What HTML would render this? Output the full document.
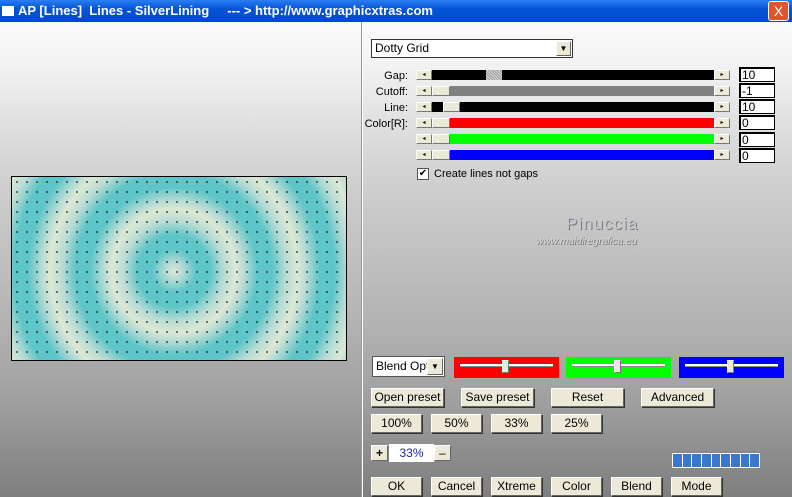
<!DOCTYPE html>
<html><head><style>
*{margin:0;padding:0;box-sizing:border-box}
html,body{width:792px;height:497px;overflow:hidden}
body{font-family:"Liberation Sans",sans-serif;font-size:11px;position:relative;background:linear-gradient(to bottom,#ffffff 0px,#f4f4f4 60px,#dedede 130px,#cbcbcb 200px,#b8b8b8 300px,#a0a0a0 400px,#7e7e7e 497px)}
.abs{position:absolute}
#title{left:0;top:0;width:792px;height:22px;background:linear-gradient(#2a7ef0,#0554d8 40%,#0449c8);color:#fff;font-weight:bold;font-size:13px;line-height:22px}
#close{left:768px;top:1px;width:21px;height:20px;background:#e0532c;border:1px solid #fff;border-radius:3px;color:#fff;font-size:14px;text-align:center;line-height:18px}
#img{left:11px;top:176px;width:336px;height:185px;border:1px solid #000;
background:radial-gradient(circle at 50% 50%, #000 0.6px, transparent 1px) 0 0/10px 10px,
repeating-radial-gradient(circle at 162px 94px,#dbe8d4 0px,#b8dcd4 8px,#5ec5c8 22px,#5ec5c8 36px,#b8dcd4 50px,#dbe8d4 62px);}
.lbl{text-align:right;width:50px;left:358px;font-size:11px}
.btn{background:#ece9d8;border:1px solid;border-color:#fff #666 #666 #fff;box-shadow:1px 1px 0 #333;height:19px;text-align:center;line-height:17px;font-size:12px}
.arr{width:16px;height:10px;background:#ece9d8;border:1px solid;border-color:#fff #777 #777 #fff;font-size:6px;line-height:8px;text-align:center}
.thumb{width:18px;height:10px;background:#ece9d8;border:1px solid;border-color:#fff #777 #777 #fff}
.val{left:739px;width:36px;height:15px;background:#fff;border:1px solid #000;border-top-width:2px;border-left-width:2px;font-size:12px;line-height:12px;padding-left:1px}
</style></head><body>
<div class="abs" id="title"><span style="display:inline-block;width:12px;height:10px;background:#fff;margin:0 4px 0 2px;vertical-align:-1px"></span>AP [Lines]&nbsp; Lines - SilverLining &nbsp;&nbsp;&nbsp; --- &gt; http://www.graphicxtras.com</div>
<div class="abs" id="close">X</div>
<div class="abs" style="left:361px;top:22px;width:1px;height:475px;background:#999"></div>
<div class="abs" style="left:362px;top:22px;width:1px;height:475px;background:#fff"></div>
<div class="abs" id="img"></div>

<div class="abs" style="left:371px;top:39px;width:202px;height:19px;background:#fff;border:1px solid #333;font-size:12px;line-height:17px;padding-left:3px">Dotty Grid</div>
<div class="abs btn" style="left:556px;top:41px;width:15px;height:15px;font-size:8px;line-height:13px;box-shadow:none">▼</div>

<div class="abs lbl" style="top:70px">Gap:</div>
<div class="abs lbl" style="top:86px">Cutoff:</div>
<div class="abs lbl" style="top:102px">Line:</div>
<div class="abs lbl" style="top:118px">Color[R]:</div>

<div class="abs arr" style="left:416px;top:70px">◂</div><div class="abs" style="left:432px;top:70px;width:282px;height:10px;background:#000"></div><div class="abs" style="left:486px;top:70px;width:16px;height:10px;background:repeating-linear-gradient(45deg,#999 0 1px,#ddd 1px 2px)"></div><div class="abs arr" style="left:714px;top:70px">▸</div>
<div class="abs arr" style="left:416px;top:86px">◂</div><div class="abs" style="left:432px;top:86px;width:282px;height:10px;background:#808080"></div><div class="abs thumb" style="left:432px;top:86px"></div><div class="abs arr" style="left:714px;top:86px">▸</div>
<div class="abs arr" style="left:416px;top:102px">◂</div><div class="abs" style="left:432px;top:102px;width:282px;height:10px;background:#000"></div><div class="abs thumb" style="left:443px;top:102px;width:17px"></div><div class="abs arr" style="left:714px;top:102px">▸</div>
<div class="abs arr" style="left:416px;top:118px">◂</div><div class="abs" style="left:432px;top:118px;width:282px;height:10px;background:#f00"></div><div class="abs thumb" style="left:432px;top:118px"></div><div class="abs arr" style="left:714px;top:118px">▸</div>
<div class="abs arr" style="left:416px;top:134px">◂</div><div class="abs" style="left:432px;top:134px;width:282px;height:10px;background:#0f0"></div><div class="abs thumb" style="left:432px;top:134px"></div><div class="abs arr" style="left:714px;top:134px">▸</div>
<div class="abs arr" style="left:416px;top:150px">◂</div><div class="abs" style="left:432px;top:150px;width:282px;height:10px;background:#00f"></div><div class="abs thumb" style="left:432px;top:150px"></div><div class="abs arr" style="left:714px;top:150px">▸</div>

<div class="abs val" style="top:67px">10</div>
<div class="abs val" style="top:83px">-1</div>
<div class="abs val" style="top:99px">10</div>
<div class="abs val" style="top:115px">0</div>
<div class="abs val" style="top:132px">0</div>
<div class="abs val" style="top:148px">0</div>

<div class="abs" style="left:417px;top:168px;width:12px;height:12px;background:#fff;border:1px solid #555;font-size:10px;line-height:10px;text-align:center">✔</div>
<div class="abs" style="left:434px;top:168px;font-size:11px">Create lines not gaps</div>

<div class="abs" style="left:566px;top:214px;font-size:17px;color:#c8c8d4;text-shadow:1px 1px 0 #777;letter-spacing:1px">Pinuccia</div>
<div class="abs" style="left:536px;top:236px;font-size:10px;color:#d8d8e0;text-shadow:1px 1px 0 #777;font-style:italic">www.maidiregrafica.eu</div>

<div class="abs" style="left:372px;top:356px;width:73px;height:21px;background:#fff;border:1px solid #555;font-size:12px;line-height:19px;padding-left:3px;overflow:hidden;white-space:nowrap">Blend Optio</div>
<div class="abs btn" style="left:427px;top:358px;width:16px;height:17px;font-size:8px;line-height:15px;box-shadow:none">▼</div>
<div class="abs" style="left:454px;top:357px;width:105px;height:21px;background:#f00"></div>
<div class="abs" style="left:566px;top:357px;width:105px;height:21px;background:#0f0"></div>
<div class="abs" style="left:679px;top:357px;width:105px;height:21px;background:#00f"></div>
<div class="abs" style="left:460px;top:364px;width:93px;height:3px;background:#fff;border-bottom:1px solid #888"></div>
<div class="abs" style="left:572px;top:364px;width:93px;height:3px;background:#fff;border-bottom:1px solid #888"></div>
<div class="abs" style="left:685px;top:364px;width:93px;height:3px;background:#fff;border-bottom:1px solid #888"></div>
<div class="abs thumb" style="left:502px;top:360px;width:7px;height:13px"></div>
<div class="abs thumb" style="left:614px;top:360px;width:7px;height:13px"></div>
<div class="abs thumb" style="left:727px;top:360px;width:7px;height:13px"></div>

<div class="abs btn" style="left:371px;top:388px;width:73px">Open preset</div>
<div class="abs btn" style="left:461px;top:388px;width:73px">Save preset</div>
<div class="abs btn" style="left:551px;top:388px;width:73px">Reset</div>
<div class="abs btn" style="left:641px;top:388px;width:73px">Advanced</div>
<div class="abs btn" style="left:371px;top:414px;width:51px">100%</div>
<div class="abs btn" style="left:431px;top:414px;width:51px">50%</div>
<div class="abs btn" style="left:491px;top:414px;width:51px">33%</div>
<div class="abs btn" style="left:551px;top:414px;width:51px">25%</div>

<div class="abs btn" style="left:371px;top:445px;width:17px;height:16px;line-height:14px;font-weight:bold;box-shadow:none">+</div>
<div class="abs" style="left:389px;top:444px;width:45px;height:18px;background:#fff;color:#1a2a9a;text-align:center;font-size:12px;line-height:18px">33%</div>
<div class="abs btn" style="left:434px;top:445px;width:17px;height:16px;line-height:14px;box-shadow:none">–</div>
<div class="abs" style="left:671px;top:452px;width:90px;height:17px;background:#fff;border:1px solid #888;padding:1px;display:flex;gap:1px">
<div style="flex:1;background:#3a78d0"></div><div style="flex:1;background:#3a78d0"></div><div style="flex:1;background:#3a78d0"></div><div style="flex:1;background:#3a78d0"></div><div style="flex:1;background:#3a78d0"></div><div style="flex:1;background:#3a78d0"></div><div style="flex:1;background:#3a78d0"></div><div style="flex:1;background:#3a78d0"></div><div style="flex:1;background:#3a78d0"></div></div>

<div class="abs btn" style="left:371px;top:477px;width:51px">OK</div>
<div class="abs btn" style="left:431px;top:477px;width:51px">Cancel</div>
<div class="abs btn" style="left:491px;top:477px;width:51px">Xtreme</div>
<div class="abs btn" style="left:551px;top:477px;width:51px">Color</div>
<div class="abs btn" style="left:611px;top:477px;width:51px">Blend</div>
<div class="abs btn" style="left:671px;top:477px;width:51px">Mode</div>
</body></html>
